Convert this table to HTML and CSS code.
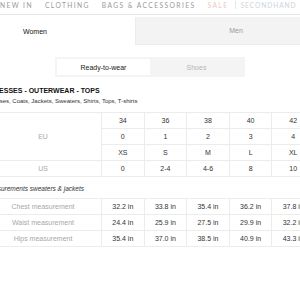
FILE: index.html
```html
<!DOCTYPE html>
<html>
<head>
<meta charset="utf-8">
<link rel="stylesheet" href="styles.css">
</head>
<body>
<nav class="nav">
  <span class="nav-item">NEW IN</span>
  <span class="nav-item">CLOTHING</span>
  <span class="nav-item">BAGS &amp; ACCESSORIES</span>
  <span class="nav-item sale">SALE</span>
  <span class="nav-sep"></span>
  <span class="nav-item second">SECONDHAND</span>
</nav>
<div class="tabs">
  <div class="tab active">Women</div>
  <div class="tab">Men</div>
</div>
<div class="subtabs-wrap">
  <div class="subtabs">
    <div class="subtab active">Ready-to-wear</div>
    <div class="subtab">Shoes</div>
  </div>
</div>
<div class="content">
  <h2 class="title">DRESSES - OUTERWEAR - TOPS</h2>
  <p class="subtitle">Dresses, Coats, Jackets, Sweaters, Shirts, Tops, T-shirts</p>
  <table class="grid">
    <tr><td class="label" rowspan="3">EU</td><td>34</td><td>36</td><td>38</td><td>40</td><td>42</td><td>44</td></tr>
    <tr><td>0</td><td>1</td><td>2</td><td>3</td><td>4</td><td>5</td></tr>
    <tr><td>XS</td><td>S</td><td>M</td><td>L</td><td>XL</td><td>XXL</td></tr>
    <tr><td class="label">US</td><td>0</td><td>2-4</td><td>4-6</td><td>8</td><td>10</td><td>12</td></tr>
  </table>
  <p class="note">Measurements sweaters &amp; jackets</p>
  <table class="grid">
    <tr><td class="label">Chest measurement</td><td>32.2 in</td><td>33.8 in</td><td>35.4 in</td><td>36.2 in</td><td>37.8 in</td><td>39.4 in</td></tr>
    <tr><td class="label">Waist measurement</td><td>24.4 in</td><td>25.9 in</td><td>27.5 in</td><td>29.9 in</td><td>32.2 in</td><td>34.6 in</td></tr>
    <tr><td class="label">Hips measurement</td><td>35.4 in</td><td>37.0 in</td><td>38.5 in</td><td>40.9 in</td><td>43.3 in</td><td>45.7 in</td></tr>
  </table>
</div>
</body>
</html>
```

FILE: styles.css
```css
html, body {
  margin: 0;
  padding: 0;
  background: #fff;
}
body {
  width: 300px;
  height: 300px;
  overflow: hidden;
  font-family: "Liberation Sans", Arial, sans-serif;
}
.nav {
  display: flex;
  align-items: center;
  height: 15px;
  border-bottom: 1px solid #e6e6e6;
  white-space: nowrap;
  gap: 12px;
  font-family: Lato, "DejaVu Sans", sans-serif;
  font-size: 6.7px;
  letter-spacing: 1.4px;
  color: #9a9a9a;
  padding-bottom: 4px;
  box-sizing: border-box;
}
.nav-item { flex: none; }
.nav-item.sale { color: #ebc9c3; margin-right: -5px; }
.nav-item.second { color: #ccd4dc; margin-left: -8px; letter-spacing: 0.9px; }
.nav-sep {
  flex: none;
  width: 1px;
  height: 8px;
  background: #e6e6e6;
}
.tabs {
  display: flex;
  margin-left: -65px;
  margin-top: 2px;
  height: 28px;
}
.tab {
  width: 200px;
  flex: none;
  display: flex;
  align-items: center;
  justify-content: center;
  font-size: 7px;
  color: #9a9a9a;
  background: #f3f3f3;
  border-left: 1px solid #ececec;
  border-bottom: 1px solid #ececec;
}
.tab.active {
  background: #fff;
  color: #111;
  border: none;
}
.subtabs-wrap {
  display: flex;
  justify-content: center;
  margin-top: 12px;
}
.subtabs {
  display: flex;
  background: #f4f4f4;
  padding: 2px;
  width: 190px;
  box-sizing: border-box;
}
.subtab {
  flex: 1;
  height: 16px;
  display: flex;
  align-items: center;
  justify-content: center;
  font-size: 7px;
  color: #b5b5b5;
}
.subtab.active {
  background: #fff;
  color: #222;
}
.content {
  margin-left: -15px;
}
.title {
  margin: 9px 0 0 4px;
  font-size: 7px;
  font-weight: bold;
  color: #111;
  line-height: 10px;
}
.subtitle {
  margin: 1px 0 0 2px;
  font-size: 6px;
  color: #333;
  line-height: 9px;
}
.grid {
  border-collapse: collapse;
  margin-top: 6px;
  table-layout: fixed;
  width: 367px;
}
.grid td {
  border: 1px solid #ececec;
  height: 15px;
  padding: 0;
  text-align: center;
  font-size: 7px;
  color: #333;
  width: 41.6px;
}
.grid td.label {
  width: 116px;
  color: #a8a8a8;
  border-left: none;
}
.note {
  margin: 7px 0 0;
  font-size: 6.5px;
  font-style: italic;
  color: #333;
  line-height: 9px;
}
.note + .grid {
  margin-top: 5px;
}
```
